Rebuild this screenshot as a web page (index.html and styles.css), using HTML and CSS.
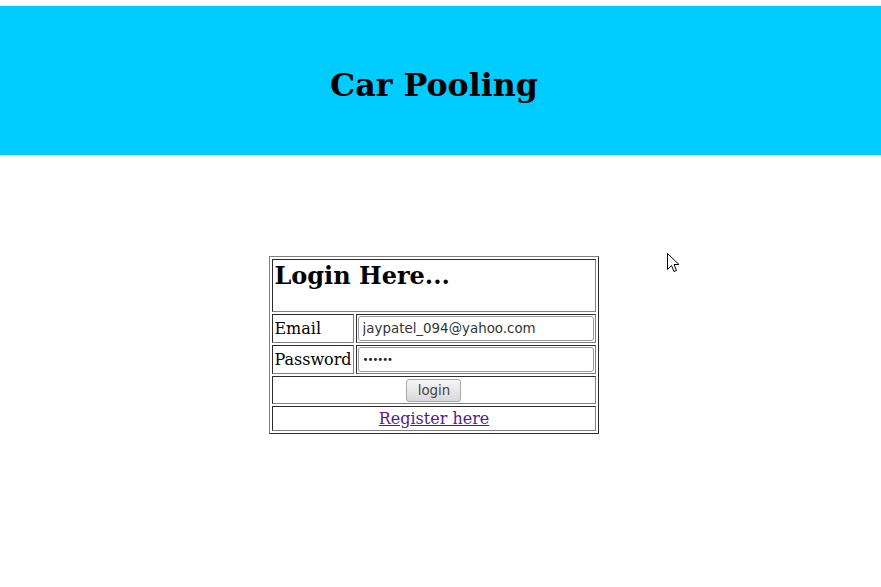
FILE: index.html
```html
<!DOCTYPE html>
<html>
<head>
<meta charset="utf-8">
<title>Car Pooling</title>
<link rel="stylesheet" href="styles.css">
</head>
<body>
<header class="banner">
  <h1 class="title">Car Pooling</h1>
</header>
<main class="content">
  <form class="login-form">
    <table class="login-table">
      <tr>
        <td colspan="2" class="head-cell"><h2 class="login-title">Login Here...</h2></td>
      </tr>
      <tr>
        <td class="label">Email</td>
        <td><input class="field" type="text" value="jaypatel_094@yahoo.com"></td>
      </tr>
      <tr>
        <td class="label">Password</td>
        <td><input class="field field-pass" type="password" value="secret"></td>
      </tr>
      <tr>
        <td colspan="2" class="center"><button type="button" class="btn">login</button></td>
      </tr>
      <tr>
        <td colspan="2" class="center"><a class="reg-link" href="#">Register here</a></td>
      </tr>
    </table>
  </form>
</main>
<svg class="cursor" width="13" height="21" viewBox="0 0 13 21">
  <path d="M0.5 0.5 L0.5 16.5 L4.5 12.5 L7 18.5 L9.5 17.5 L7 11.5 L12 11.5 Z" fill="#fff" stroke="#000" stroke-width="1"/>
</svg>
</body>
</html>
```

FILE: styles.css
```css
html, body {
  margin: 0;
  padding: 0;
  background: #fff;
}
body {
  font-family: "DejaVu Serif", serif;
  font-size: 16px;
  color: #000;
  position: relative;
  min-height: 587px;
}
.banner {
  margin-top: 6px;
  height: 149px;
  background: #00ccff;
  display: flex;
  align-items: center;
  justify-content: center;
  padding-right: 13px;
}
.title {
  margin: 0;
  font-size: 31.7px;
  font-weight: bold;
  font-family: "DejaVu Serif", serif;
  position: relative;
  top: 4px;
}
.content {
  display: flex;
  justify-content: center;
  padding-right: 13px;
  padding-top: 101px;
}
.login-form {
  margin: 0;
}
.login-table {
  border: 1px outset #808080;
  border-spacing: 2px;
  border-collapse: separate;
}
.login-table td {
  border: 1px inset #808080;
  padding: 1px;
}
.head-cell {
  vertical-align: top;
}
.login-title {
  margin: 1px 0 20px 0;
  font-size: 24px;
  line-height: 28px;
  font-weight: bold;
}
.label {
  line-height: 19px;
}
.field {
  box-sizing: border-box;
  width: 236px;
  height: 25px;
  margin: 0;
  padding: 0 4px;
  border: 1px solid #9a9a9a;
  border-radius: 3px;
  font-family: "DejaVu Sans", sans-serif;
  font-size: 13.4px;
  color: #333;
  background: #fff;
  display: block;
}
.field-pass {
  font-size: 10px;
  letter-spacing: -1px;
  color: #222;
}
.center {
  text-align: center;
}
.btn {
  box-sizing: border-box;
  width: 55px;
  height: 23px;
  margin: 1px 0 0;
  padding: 0;
  border: 1px solid #a8a8a8;
  border-radius: 3px;
  background: linear-gradient(#f6f6f6, #d8d8d8);
  font-family: "DejaVu Sans", sans-serif;
  font-size: 13.4px;
  color: #444;
}
.reg-link {
  color: #551a8b;
  text-decoration: underline;
  line-height: 21px;
}
.cursor {
  position: absolute;
  left: 667px;
  top: 253px;
}
```
